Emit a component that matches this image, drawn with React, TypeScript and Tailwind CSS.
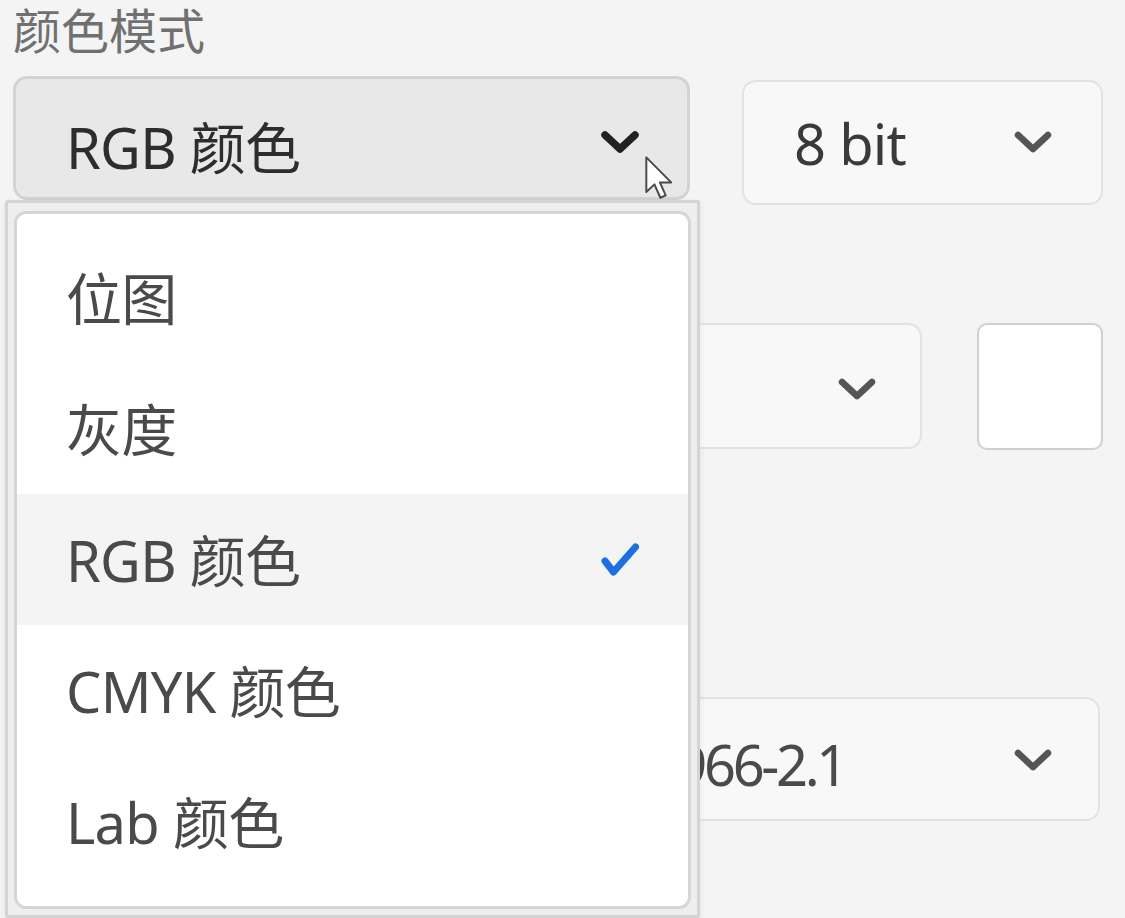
import React from "react";

const Chevron = ({ color = "#555", w = 6.5 }: { color?: string; w?: number }) => (
  <svg width="40" height="25" viewBox="0 0 40 25" fill="none">
    <path d="M5 5 L20 19 L35 5" stroke={color} strokeWidth={w} strokeLinecap="round" strokeLinejoin="round" />
  </svg>
);

const Check = () => (
  <svg width="40" height="38" viewBox="0 0 40 38" fill="none">
    <path d="M5 20 L13.5 31 L35.5 6" stroke="#1b6fe0" strokeWidth="7" strokeLinecap="round" strokeLinejoin="round" />
  </svg>
);

const Cursor = () => (
  <svg width="29" height="44" viewBox="0 0 13.2 20" fill="none">
    <path
      d="M0.6 0.6 L0.6 16.4 L4.3 12.9 L7 19 L9.4 17.9 L6.8 12 L11.9 12 Z"
      fill="#ffffff"
      stroke="#4a4a4a"
      strokeWidth="0.9"
      strokeLinejoin="round"
    />
  </svg>
);

const items = ["位图", "灰度", "RGB 颜色", "CMYK 颜色", "Lab 颜色"];

export default function App() {
  return (
    <div className="relative w-[1125px] h-[918px] overflow-hidden bg-[#f4f4f4] font-['Noto_Sans','Noto_Sans_CJK_SC',sans-serif] tracking-[-0.045em]">
      <div className="pl-[13px] pr-[22px] pt-[2px]">
        <div className="text-[48px] leading-[58px] tracking-normal text-[#707070]">颜色模式</div>

        <div className="mt-[16px] flex items-start gap-[52px]">
          <div className="flex h-[124px] w-[677px] items-center rounded-[14px] border-[3px] border-[#d3d3d3] bg-[#e8e8e8] pl-[50px] pr-[47px]">
            <span className="mt-[18px] text-[56px] leading-[76px] text-[#2d2d2d]">RGB 颜色</span>
            <div className="ml-auto mt-[8px]">
              <Chevron color="#222" w={7.5} />
            </div>
          </div>
          <div className="mt-[4px] flex h-[125px] w-[361px] items-center rounded-[14px] border-[2px] border-[#e2e2e2] bg-[#f8f8f8] pl-[50px] pr-[48px]">
            <span className="text-[56px] leading-[76px] text-[#3a3a3a]">8 bit</span>
            <div className="ml-auto">
              <Chevron />
            </div>
          </div>
        </div>

        <div className="mt-[118px] flex items-start gap-[55px]">
          <div className="flex h-[126px] w-[909px] items-center rounded-[14px] border-[2px] border-[#e2e2e2] bg-[#f8f8f8] pl-[50px] pr-[43px]">
            <div className="ml-auto mt-[6px]">
              <Chevron />
            </div>
          </div>
          <div className="h-[127px] w-[126px] rounded-[10px] border-[2px] border-[#cfcfcf] bg-white" />
        </div>

        <div className="mt-[247px] flex h-[124px] w-[1087px] items-center rounded-[14px] border-[2px] border-[#e2e2e2] bg-[#f8f8f8] pr-[45px]">
          <div className="mt-[9px] w-[830px] whitespace-nowrap text-right text-[56px] leading-[76px] tracking-[-0.06em] text-[#4a4a4a]">
            sRGB IEC61966-2.1
          </div>
          <div className="ml-auto mt-[3px]">
            <Chevron />
          </div>
        </div>
      </div>

      <div className="absolute left-[645px] top-[156px]">
        <Cursor />
      </div>

      <div className="absolute left-[5px] top-[200px] flex h-[718px] w-[695px] flex-col rounded-[3px] border-[3px] border-[#d4d4d4] bg-[#eeeeee] px-[6px] pb-[6px] pt-[8px] shadow-[0_2px_6px_rgba(0,0,0,0.08)]">
        <div className="flex-1 rounded-[12px] border-[3px] border-[#d6d6d6] bg-white pt-[18px]">
          {items.map((t, i) => (
            <div
              key={t}
              className={
                i === 2
                  ? "flex h-[131px] items-center bg-[#f4f4f4] pl-[49px] pr-[48px]"
                  : "flex h-[131px] items-center pl-[49px] pr-[48px]"
              }
            >
              <span className="text-[56px] leading-[76px] text-[#4a4a4a]">{t}</span>
              {i === 2 && (
                <div className="ml-auto">
                  <Check />
                </div>
              )}
            </div>
          ))}
        </div>
      </div>
    </div>
  );
}
